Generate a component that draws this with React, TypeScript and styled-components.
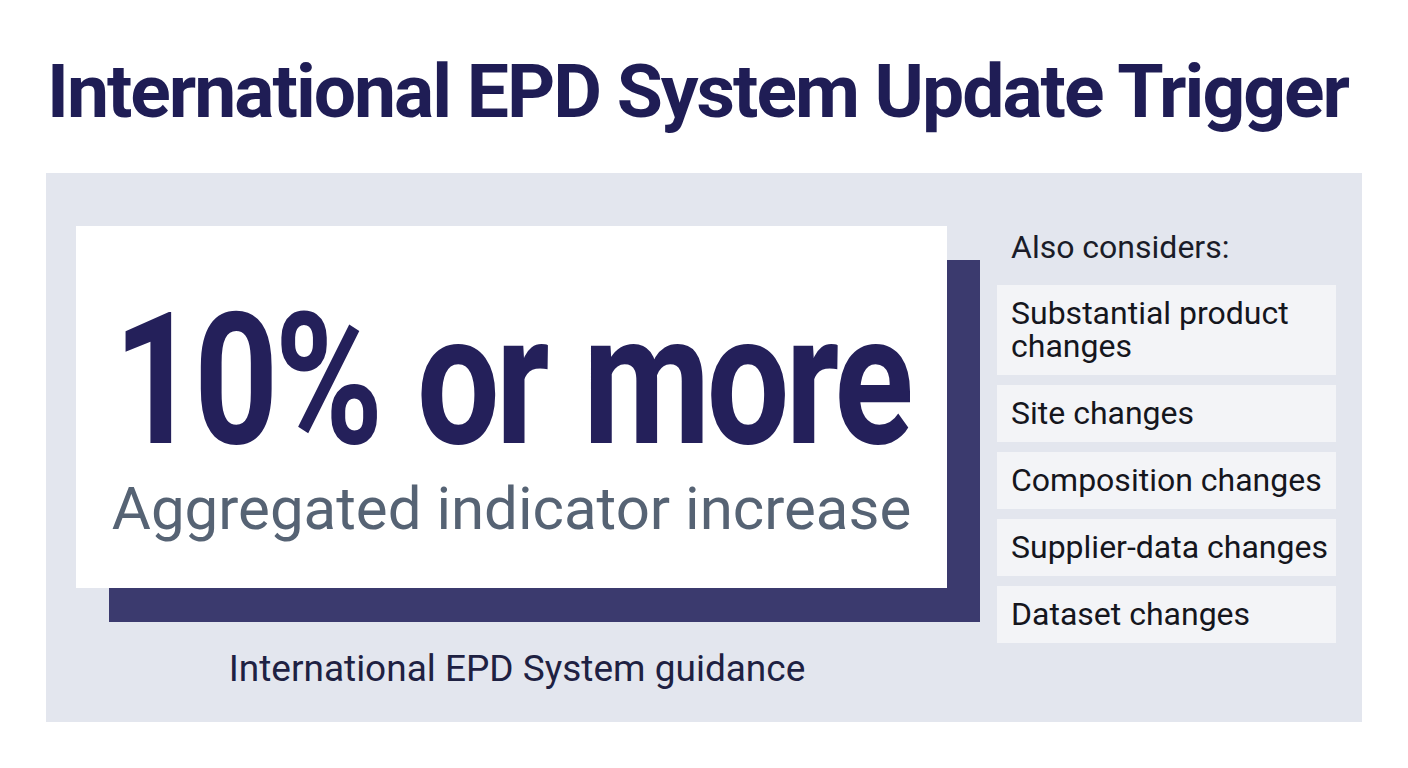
import React from 'react';
import styled, { createGlobalStyle } from 'styled-components';

const GlobalStyle = createGlobalStyle`
  html, body {
    margin: 0;
    padding: 0;
    background: #ffffff;
    font-family: Roboto, "Liberation Sans", Arial, sans-serif;
  }
`;

const Page = styled.div`
  width: 1408px;
  height: 768px;
  box-sizing: border-box;
  padding: 0 46px;
  overflow: hidden;
`;

const Title = styled.h1`
  margin: 0;
  padding: 47px 0 0 1px;
  height: 173px;
  box-sizing: border-box;
  font-size: 75px;
  line-height: 88px;
  font-weight: 700;
  color: #1f1d55;
  letter-spacing: -2px;
  white-space: nowrap;
`;

const Panel = styled.section`
  display: grid;
  grid-template-columns: 871px 339px;
  column-gap: 50px;
  height: 549px;
  box-sizing: border-box;
  padding: 53px 26px 0 30px;
  background: #e3e6ee;
`;

const LeftColumn = styled.div`
  display: flex;
  flex-direction: column;
  min-width: 0;
`;

const HighlightCard = styled.div`
  height: 362px;
  box-sizing: border-box;
  background: #ffffff;
  box-shadow: 33px 34px 0 #3b3a6e;
  display: flex;
  flex-direction: column;
  align-items: center;
  padding-top: 69px;
`;

const BigFigure = styled.div`
  font-size: 184px;
  line-height: 170px;
  font-weight: 700;
  color: #24205a;
  letter-spacing: -5px;
  word-spacing: 6px;
  white-space: nowrap;
  transform: scaleX(0.8);
`;

const FigureLabel = styled.div`
  margin-top: 9px;
  font-size: 60px;
  line-height: 70px;
  font-weight: 400;
  color: #566374;
  white-space: nowrap;
`;

const Caption = styled.div`
  margin-top: 59px;
  padding-left: 11px;
  text-align: center;
  font-size: 37px;
  line-height: 44px;
  color: #1e2142;
  white-space: nowrap;
`;

const RightColumn = styled.div`
  display: flex;
  flex-direction: column;
  gap: 10px;
`;

const ListHeading = styled.div`
  margin: 2px 0 9px 14px;
  font-size: 32px;
  line-height: 38px;
  color: #1a1c28;
`;

const ConsiderItem = styled.div`
  background: #f3f4f7;
  padding: 12px 4px 12px 14px;
  font-size: 32px;
  line-height: 33px;
  color: #15161d;
`;

const considerations = [
  'Substantial product changes',
  'Site changes',
  'Composition changes',
  'Supplier-data changes',
  'Dataset changes',
];

export default function App(): React.ReactElement {
  return (
    <>
      <GlobalStyle />
      <Page>
        <Title>International EPD System Update Trigger</Title>
        <Panel>
          <LeftColumn>
            <HighlightCard>
              <BigFigure>10% or more</BigFigure>
              <FigureLabel>Aggregated indicator increase</FigureLabel>
            </HighlightCard>
            <Caption>International EPD System guidance</Caption>
          </LeftColumn>
          <RightColumn>
            <ListHeading>Also considers:</ListHeading>
            {considerations.map((item) => (
              <ConsiderItem key={item}>{item}</ConsiderItem>
            ))}
          </RightColumn>
        </Panel>
      </Page>
    </>
  );
}
